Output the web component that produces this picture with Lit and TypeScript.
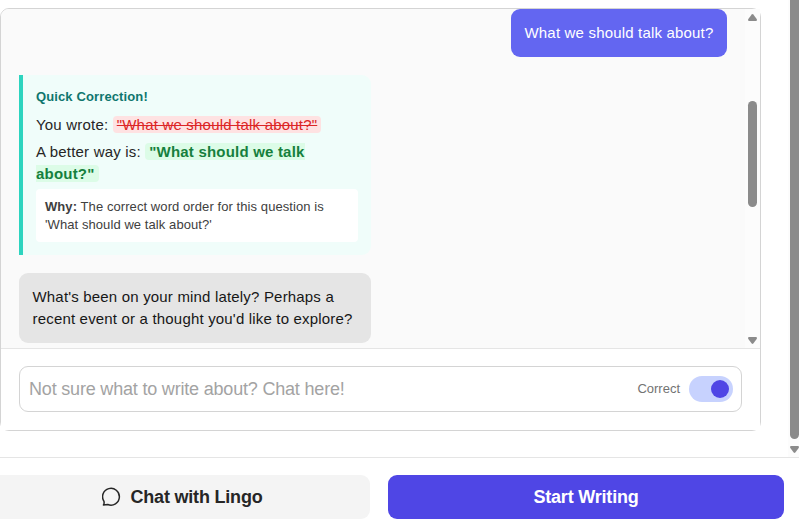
import { LitElement, html, css } from "lit";
import { customElement } from "lit/decorators.js";

@customElement("app-root")
export class AppRoot extends LitElement {
  static styles = css`
    :host {
      display: block;
      position: relative;
      width: 799px;
      height: 529px;
      overflow: hidden;
      background: #fff;
      color: #262626;
      font-family: "Liberation Sans", Arial, sans-serif;
      font-size: 15px;
      line-height: 22px;
    }
    * { box-sizing: border-box; }
    .page { display: flex; height: 457px; justify-content: space-between; }
    .card {
      width: 761px;
      height: 423px;
      margin-top: 8px;
      border: 1px solid #d4d4d4;
      border-radius: 9px;
      display: flex;
      flex-direction: column;
    }
    .chat {
      height: 339px;
      display: flex;
      background: #fafafa;
      border-top-left-radius: 8px;
    }
    .messages {
      flex: 1;
      padding: 0 18px;
      display: flex;
      flex-direction: column;
      align-items: flex-start;
      gap: 18px;
    }
    .bubble { border-radius: 9px; padding: 13px 13.5px; letter-spacing: 0.18px; }
    .user {
      align-self: flex-end;
      height: 48px;
      width: 216px;
      background: #6366f1;
      color: #fff;
      white-space: nowrap;
    }
    .bot { width: 352px; height: 70px; background: #e5e5e5; color: #171717; }
    .fix {
      width: 352px;
      height: 180px;
      padding: 11px 13px 13px;
      border-left: 4px solid #2dd4bf;
      border-radius: 0 9px 9px 0;
      background: #f0fdfa;
    }
    .title { color: #0f766e; font-size: 13px; font-weight: 700; letter-spacing: 0.12px; line-height: 22px; }
    .line { margin-top: 5px; letter-spacing: 0.2px; }
    .line.first { margin-top: 6px; }
    .wrong, .right { padding: 0 4px; border-radius: 4px; }
    .wrong { background: #fee2e2; color: #dc2626; text-decoration: line-through; }
    .right { background: #dcfce7; color: #15803d; font-weight: 700; }
    .why {
      height: 53px;
      margin-top: 4px;
      padding: 9px;
      border-radius: 4px;
      background: #fff;
      color: #404040;
      font-size: 13px;
      letter-spacing: 0.08px;
      line-height: 18px;
    }
    .bar {
      width: 15px;
      display: flex;
      flex-direction: column;
      align-items: center;
      background: #fcfcfc;
    }
    .bar svg { display: block; width: 9px; height: 7px; fill: #8b8b8b; }
    .thumb { width: 9px; background: #8b8b8b; border-radius: 5px; }
    .inner svg:first-child { margin-top: 5px; }
    .inner .thumb { height: 106px; margin: 80px 0 130px; }
    .outer { width: 11px; align-items: flex-end; }
    .outer .thumb { height: 439px; border-radius: 0 0 5px 5px; margin-bottom: 7px; }
    .compose {
      flex: 1;
      padding: 17px 18px 18px;
      border-top: 1px solid #e5e5e5;
      background: #fff;
    }
    .field {
      height: 46px;
      display: flex;
      align-items: center;
      padding: 0 8px 0 9px;
      border: 1px solid #d4d4d4;
      border-radius: 9px;
    }
    .hint { flex: 1; font-size: 18px; letter-spacing: -0.19px; color: #a3a3a3; }
    .label { font-size: 13px; color: #737373; margin-right: 9px; }
    .switch {
      width: 44px;
      height: 26px;
      border-radius: 13px;
      background: #c7d2fe;
      display: flex;
      align-items: center;
      justify-content: flex-end;
      padding-right: 4px;
    }
    .knob { width: 18px; height: 18px; border-radius: 50%; background: #4f46e5; }
    .actions {
      height: 72px;
      border-top: 1px solid #e5e5e5;
      padding: 17px 15px 0 0;
      display: flex;
      gap: 18px;
    }
    .btn {
      height: 44px;
      display: flex;
      align-items: center;
      justify-content: center;
      gap: 9px;
      font-size: 18px;
      font-weight: 700;
      letter-spacing: -0.2px;
      border-radius: 9px;
    }
    .ghost { width: 370px; padding-right: 6px; background: #f4f4f4; border-radius: 0 9px 9px 0; }
    .primary { flex: 1; background: #4f46e5; color: #fff; }
    .ghost svg { width: 20px; height: 20px; }
  `;

  render() {
    const up = html`<svg viewBox="0 0 9 7"><path d="M3.7 .5Q4.5 -.4 5.3 .5L8.7 5Q9.4 7 8 7H1Q-.4 7 .3 5Z"/></svg>`;
    const down = html`<svg viewBox="0 0 9 7"><path d="M3.7 6.5Q4.5 7.4 5.3 6.5L8.7 2Q9.4 0 8 0H1Q-.4 0 .3 2Z"/></svg>`;
    return html`
      <div class="page">
        <div class="card">
          <div class="chat">
            <div class="messages">
              <div class="bubble user">What we should talk about?</div>
              <div class="fix">
                <div class="title">Quick Correction!</div>
                <div class="line first">You wrote: <span class="wrong">"What we should talk about?"</span></div>
                <div class="line">A better way is: <span class="right">"What should we talk about?"</span></div>
                <div class="why"><b>Why:</b> The correct word order for this question is 'What should we talk about?'</div>
              </div>
              <div class="bubble bot">What's been on your mind lately? Perhaps a recent event or a thought you'd like to explore?</div>
            </div>
            <div class="bar inner">${up}<div class="thumb"></div>${down}</div>
          </div>
          <div class="compose">
            <div class="field">
              <span class="hint">Not sure what to write about? Chat here!</span>
              <span class="label">Correct</span>
              <div class="switch"><div class="knob"></div></div>
            </div>
          </div>
        </div>
        <div class="bar outer"><div class="thumb"></div>${down}</div>
      </div>
      <div class="actions">
        <div class="btn ghost">
          <svg viewBox="0 0 20 20" fill="none" stroke="#262626" stroke-width="1.5" stroke-linejoin="round"><path d="M1.4 18Q2.4 17 2 14.4A8.4 8.4 0 1 1 5.8 17.5Q4 17.7 1.4 18Z"/></svg>
          <span>Chat with Lingo</span>
        </div>
        <div class="btn primary">Start Writing</div>
      </div>
    `;
  }
}
